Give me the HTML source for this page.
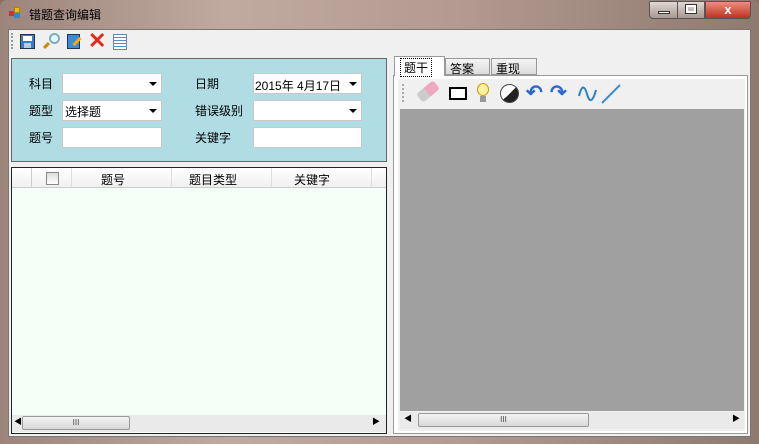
<!DOCTYPE html>
<html><head><meta charset="utf-8"><style>
*{margin:0;padding:0;box-sizing:border-box}
body{width:759px;height:444px;overflow:hidden;font:12px "Liberation Sans","Noto Sans CJK SC",sans-serif;background:#8a7064;position:relative}
.abs{position:absolute}
.t{font-size:12px;color:#000;white-space:nowrap}
.combo{position:absolute;background:#fff;border:1px solid #c8c8c8;height:21px}
.combo .arr{position:absolute;right:4px;top:8px;width:0;height:0;border-left:4px solid transparent;border-right:4px solid transparent;border-top:4px solid #000}
.sb{position:absolute;background:#eaeaea}
.thumb{position:absolute;top:1px;height:14px;border:1px solid #999;border-radius:2px;background:linear-gradient(#f4f4f4,#d8d8d8);font-size:8px;text-align:center;line-height:12px;color:#444}
</style></head><body>
<div class="abs" style="left:0;top:0;width:759px;height:444px;background:linear-gradient(90deg,#9c847a,#c0aaa0 30%,#b49a90 60%,#a08a80 80%,#8f7a70);border-radius:7px 7px 0 0"></div>
<div class="abs" style="left:9px;top:7px;width:12px;height:12px"><div class="abs" style="left:0;top:4px;width:5px;height:5px;background:#c33"></div><div class="abs" style="left:5px;top:0;width:6px;height:6px;background:#e8b830;border:1px solid #a80"></div><div class="abs" style="left:5px;top:6px;width:6px;height:5px;background:#38c"></div></div>
<div class="abs t" style="left:29px;top:6px;font-size:12px">错题查询编辑</div>
<div class="abs" style="left:649px;top:1px;width:56px;height:18px;border:1px solid #555;border-radius:0 0 0 4px;background:linear-gradient(#e0d8d4,#a89890)"></div>
<div class="abs" style="left:677px;top:1px;width:1px;height:18px;background:#555"></div>
<div class="abs" style="left:658px;top:11px;width:12px;height:3px;background:#fff;border:1px solid #333"></div>
<div class="abs" style="left:686px;top:5px;width:10px;height:8px;border:2px solid #fff;outline:1px solid #333"></div>
<div class="abs" style="left:705px;top:1px;width:46px;height:18px;border:1px solid #555;border-radius:0 0 4px 0;background:linear-gradient(#e89080,#c03020);color:#fff;font-weight:bold;text-align:center;line-height:16px;font-size:13px">x</div>
<div class="abs" style="left:8px;top:29px;width:743px;height:408px;background:#f0f0f0;border:1px solid #777"></div>
<div class="abs" style="left:11px;top:33px;width:2px;height:16px;border-left:2px dotted #999"></div>
<div class="abs" style="left:20px;top:34px;width:15px;height:15px;background:#3a7cc8;border:1px solid #235"><div class="abs" style="left:2px;top:1px;width:9px;height:5px;background:#fff"></div><div class="abs" style="left:3px;top:8px;width:7px;height:5px;background:#bcd"></div></div>
<div class="abs" style="left:49px;top:33px;width:11px;height:11px;border:2px solid #8ab;border-radius:50%;background:#dff"></div>
<div class="abs" style="left:43px;top:44px;width:7px;height:3px;background:#c80;transform:rotate(-45deg)"></div>
<div class="abs" style="left:67px;top:34px;width:13px;height:15px;background:#3a8cd8;border:1px solid #235"></div>
<div class="abs" style="left:72px;top:40px;width:10px;height:3px;background:#fa0;transform:rotate(-45deg)"></div>
<div class="abs" style="left:88px;top:29px;color:#e02a1a;font-size:22px;font-weight:bold;line-height:24px">✕</div>
<div class="abs" style="left:113px;top:34px;width:14px;height:16px;background:repeating-linear-gradient(#fff 0 2px,#5a8ac8 2px 3px);border:1px solid #68a"></div>
<div class="abs" style="left:11px;top:58px;width:376px;height:104px;background:#b0dde4;border:1px solid #666"></div>
<div class="abs t" style="left:29px;top:75px">科目</div>
<div class="abs t" style="left:29px;top:102px">题型</div>
<div class="abs t" style="left:29px;top:129px">题号</div>
<div class="abs t" style="left:195px;top:75px">日期</div>
<div class="abs t" style="left:195px;top:102px">错误级别</div>
<div class="abs t" style="left:195px;top:129px">关键字</div>
<div class="combo" style="left:62px;top:73px;width:100px"><div class="arr"></div></div>
<div class="combo" style="left:62px;top:100px;width:100px"><span class="t" style="position:absolute;left:2px;top:2px">选择题</span><div class="arr"></div></div>
<div class="combo" style="left:62px;top:127px;width:100px"></div>
<div class="combo" style="left:253px;top:73px;width:109px"><span class="t" style="position:absolute;left:1px;top:3px">2015年 4月17日</span><div class="arr"></div></div>
<div class="combo" style="left:253px;top:100px;width:109px"><div class="arr"></div></div>
<div class="combo" style="left:253px;top:127px;width:109px"></div>
<div class="abs" style="left:11px;top:167px;width:376px;height:267px;background:#f4fff8;border:1px solid #222"></div>
<div class="abs" style="left:12px;top:168px;width:374px;height:20px;background:linear-gradient(#fff,#f0f0f0);border-bottom:1px solid #ccc"></div>
<div class="abs" style="left:31px;top:168px;width:1px;height:20px;background:#ccc"></div>
<div class="abs" style="left:46px;top:172px;width:13px;height:13px;border:1px solid #888;background:linear-gradient(#ddd,#fff)"></div>
<div class="abs" style="left:71px;top:168px;width:1px;height:20px;background:#ddd"></div>
<div class="abs" style="left:171px;top:168px;width:1px;height:20px;background:#ddd"></div>
<div class="abs" style="left:271px;top:168px;width:1px;height:20px;background:#ddd"></div>
<div class="abs" style="left:371px;top:168px;width:1px;height:20px;background:#ddd"></div>
<div class="abs t" style="left:101px;top:171px">题号</div>
<div class="abs t" style="left:189px;top:171px">题目类型</div>
<div class="abs t" style="left:294px;top:171px">关键字</div>
<div class="sb" style="left:12px;top:415px;width:374px;height:17px"><div class="thumb" style="left:10px;width:108px">III</div><span class="abs" style="left:2px;top:1px;font-size:8px">◀</span><span class="abs" style="left:360px;top:1px;font-size:8px">▶</span></div>
<div class="abs" style="left:393px;top:75px;width:355px;height:359px;background:#fff;border:1px solid #999"></div>
<div class="abs" style="left:394px;top:56px;width:51px;height:20px;background:#fff;border:1px solid #999;border-bottom:none"><span class="t" style="position:absolute;left:5px;top:1px;border:1px dotted #000;padding:0 3px">题干</span></div>
<div class="abs" style="left:445px;top:58px;width:45px;height:17px;background:linear-gradient(#f4f4f4,#dcdcdc);border:1px solid #999"><span class="t" style="position:absolute;left:4px;top:1px">答案</span></div>
<div class="abs" style="left:491px;top:58px;width:46px;height:17px;background:linear-gradient(#f4f4f4,#dcdcdc);border:1px solid #999"><span class="t" style="position:absolute;left:4px;top:1px">重现</span></div>
<div class="abs" style="left:398px;top:79px;width:347px;height:352px;background:#f0f0f0"></div>
<div class="abs" style="left:402px;top:84px;width:2px;height:18px;border-left:2px dotted #aaa"></div>
<div class="abs" style="left:417px;top:86px;width:22px;height:11px;border-radius:3px;background:linear-gradient(90deg,#ccc 45%,#f0a8c0 45%);transform:rotate(-40deg)"></div>
<div class="abs" style="left:449px;top:87px;width:18px;height:13px;border:2px solid #000;background:#fff"></div>
<div class="abs" style="left:477px;top:83px;width:12px;height:13px;border-radius:50%;background:#fff2a0;border:1px solid #c90"></div>
<div class="abs" style="left:480px;top:96px;width:6px;height:6px;background:#999"></div>
<div class="abs" style="left:500px;top:84px;width:19px;height:19px;border-radius:50%;background:linear-gradient(135deg,#fff 50%,#222 50%);border:1px solid #444"></div>
<div class="abs" style="left:526px;top:82px;color:#2a6ad0;font-size:20px;font-weight:bold;line-height:22px">↶</div>
<div class="abs" style="left:550px;top:82px;color:#2a6ad0;font-size:20px;font-weight:bold;line-height:22px">↷</div>
<svg class="abs" style="left:576px;top:82px" width="46" height="24"><path d="M3 14 Q7 -2 11 12 Q15 26 20 8" stroke="#2a80c8" stroke-width="2" fill="none"/><path d="M26 21 L44 3" stroke="#3a90d0" stroke-width="2"/></svg>
<div class="abs" style="left:400px;top:109px;width:344px;height:302px;background:#a0a0a0"></div>
<div class="sb" style="left:400px;top:412px;width:344px;height:17px"><div class="thumb" style="left:18px;width:171px">III</div><span class="abs" style="left:4px;top:1px;font-size:8px">◀</span><span class="abs" style="left:332px;top:1px;font-size:8px">▶</span></div>
</body></html>
